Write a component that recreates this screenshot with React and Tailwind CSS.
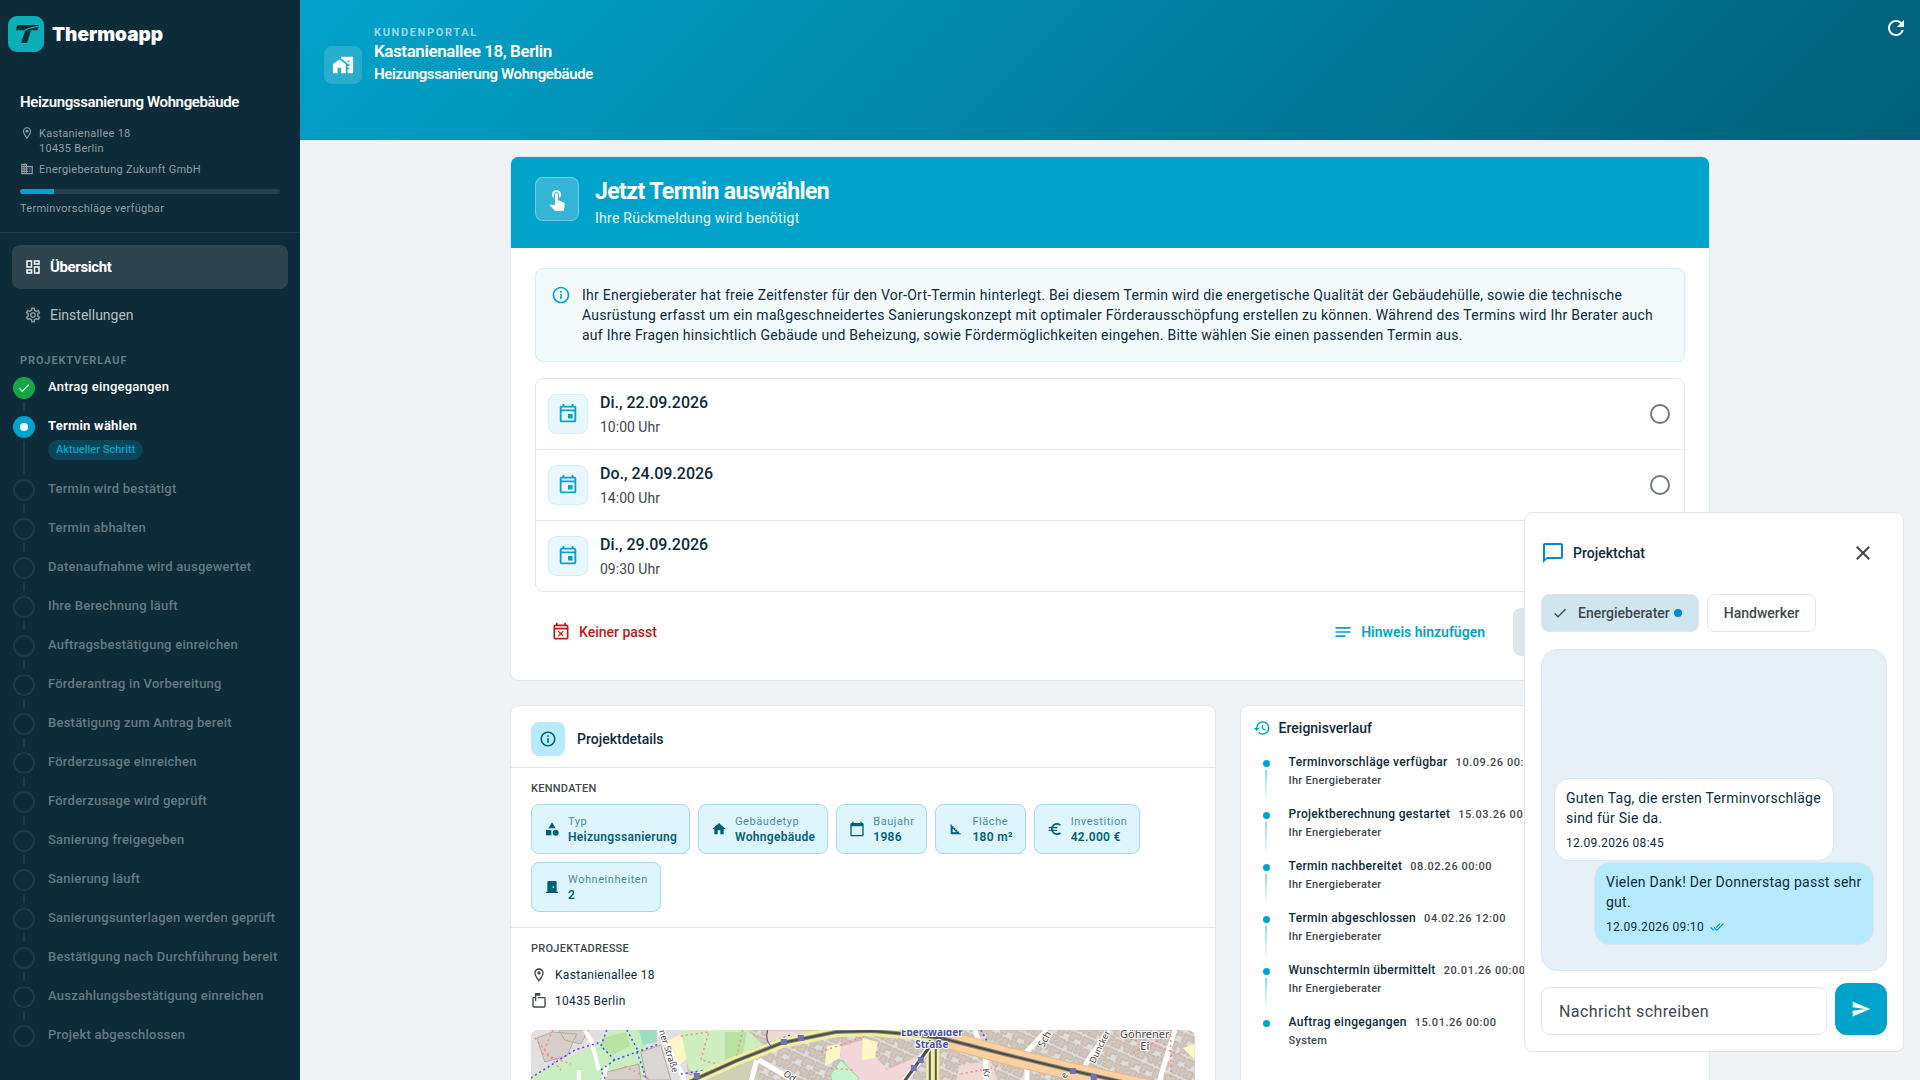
import React, { useState } from 'react'
import {
    MdBusiness, MdCalendarToday, MdCategory, MdCheck, MdChatBubbleOutline, MdClose, MdDoneAll, MdDoorFront,
    MdEuro, MdHistory, MdHome, MdHomeWork, MdInfoOutline, MdNotes, MdOutlineDashboard, MdOutlineEventBusy,
    MdOutlineInsertInvitation, MdOutlineLocationOn, MdOutlineMarkunreadMailbox, MdOutlineSettings, MdRefresh,
    MdSend, MdSquareFoot, MdTouchApp
} from 'react-icons/md'

const steps = [
    { label: 'Antrag eingegangen', state: 'done' },
    { label: 'Termin wählen', state: 'current' },
    { label: 'Termin wird bestätigt' },
    { label: 'Termin abhalten' },
    { label: 'Datenaufnahme wird ausgewertet' },
    { label: 'Ihre Berechnung läuft' },
    { label: 'Auftragsbestätigung einreichen' },
    { label: 'Förderantrag in Vorbereitung' },
    { label: 'Bestätigung zum Antrag bereit' },
    { label: 'Förderzusage einreichen' },
    { label: 'Förderzusage wird geprüft' },
    { label: 'Sanierung freigegeben' },
    { label: 'Sanierung läuft' },
    { label: 'Sanierungsunterlagen werden geprüft' },
    { label: 'Bestätigung nach Durchführung bereit' },
    { label: 'Auszahlungsbestätigung einreichen' },
    { label: 'Projekt abgeschlossen' },
]

const slots = [
    { id: 'a', date: 'Di., 22.09.2026', time: '10:00 Uhr' },
    { id: 'b', date: 'Do., 24.09.2026', time: '14:00 Uhr' },
    { id: 'c', date: 'Di., 29.09.2026', time: '09:30 Uhr' },
]

const facts = [
    { icon: MdCategory, label: 'Typ', value: 'Heizungssanierung' },
    { icon: MdHome, label: 'Gebäudetyp', value: 'Wohngebäude' },
    { icon: MdCalendarToday, label: 'Baujahr', value: '1986' },
    { icon: MdSquareFoot, label: 'Fläche', value: '180 m²' },
    { icon: MdEuro, label: 'Investition', value: '42.000 €' },
    { icon: MdDoorFront, label: 'Wohneinheiten', value: '2' },
]

const events = [
    { title: 'Terminvorschläge verfügbar', time: '10.09.26 00:00', by: 'Ihr Energieberater' },
    { title: 'Projektberechnung gestartet', time: '15.03.26 00:00', by: 'Ihr Energieberater' },
    { title: 'Termin nachbereitet', time: '08.02.26 00:00', by: 'Ihr Energieberater' },
    { title: 'Termin abgeschlossen', time: '04.02.26 12:00', by: 'Ihr Energieberater' },
    { title: 'Wunschtermin übermittelt', time: '20.01.26 00:00', by: 'Ihr Energieberater' },
    { title: 'Auftrag eingegangen', time: '15.01.26 00:00', by: 'System' },
]

const Logo = () => (
    <svg viewBox="0 0 36 36" className="w-9 h-9" aria-hidden="true">
        <rect width="36" height="36" rx="9" fill="#0aafb8" />
        <path d="M9 9H31L29.500 14.200H23L19 27H13L16.800 16Q17.300 14.200 15.500 14.200H8Z" fill="#0d2b38" />
        <path d="M15 16.500Q18 11.400 30.500 10.600" stroke="#0aafb8" strokeWidth="1.100" fill="none" />
    </svg>
)

const Step = ({ step, last }) => (
    <li className="flex gap-[13px]">
        <div className="flex flex-col items-center w-[22px] shrink-0">
            {step.state === 'done' && (
                <span className="flex items-center justify-center w-[22px] h-[22px] rounded-full bg-[#18a549]">
                    <MdCheck className="text-white text-[14px]" />
                </span>
            )}
            {step.state === 'current' && (
                <span className="flex items-center justify-center w-[22px] h-[22px] rounded-full bg-[#02a3cb]">
                    <span className="w-2 h-2 rounded-full bg-white" />
                </span>
            )}
            {!step.state && <span className="w-[22px] h-[22px] rounded-full border-2 border-[#1d3a47]" />}
            {!last && <span className="w-[2px] grow mt-[3px] mb-[5px] bg-[#1d3a47]" />}
        </div>
        <div className={step.state === 'current' ? 'h-[63px]' : 'h-[39px]'}>
            <p className={`text-[13px] leading-5 tracking-[0.018em] whitespace-nowrap ${step.state === 'current' ? 'font-bold text-white' : step.state === 'done' ? 'font-medium text-white' : 'font-medium text-[#657982]'}`}>
                {step.label}
            </p>
            {step.state === 'current' && (
                <span className="inline-block mt-1 px-2 rounded-full bg-[#0a4558] text-[11px] leading-5 font-medium text-[#02a3cb] align-top">Aktueller Schritt</span>
            )}
        </div>
    </li>
)

const Sidebar = () => (
    <aside className="w-[300px] shrink-0 bg-[#0d2b38] text-white">
        <div className="flex items-center gap-2 px-2 pt-4">
            <Logo />
            <span className="font-['Inter',sans-serif] text-[19px] leading-6 pt-px font-black">Thermoapp</span>
        </div>

        <div className="px-5 pt-[38px] pb-[15px] border-b border-[#1d3a47]">
            <h2 className="text-[15px] leading-6 font-semibold tracking-tight">Heizungssanierung Wohngebäude</h2>
            <div className="flex gap-[5px] mt-3 text-[11px] leading-[15px] tracking-wide text-[#919da4]">
                <MdOutlineLocationOn className="text-[14px] shrink-0" />
                <p>Kastanienallee 18<br />10435 Berlin</p>
            </div>
            <div className="flex gap-[5px] mt-[6px] text-[11px] leading-[15px] tracking-wide text-[#919da4]">
                <MdBusiness className="text-[14px] shrink-0" />
                <p>Energieberatung Zukunft GmbH</p>
            </div>
            <div className="mt-3 h-[5px] rounded-full bg-[#253f4b] overflow-hidden">
                <div className="h-full w-[13%] bg-[#02a3cb]" />
            </div>
            <p className="mt-[7px] text-[11px] leading-4 tracking-wide text-[#919da4]">Terminvorschläge verfügbar</p>
        </div>

        <nav className="flex flex-col gap-1 px-3 pt-3">
            <a href="#uebersicht" className="flex items-center gap-2 h-11 px-3 rounded-lg bg-[#2d444f] text-[15px] font-bold tracking-tight">
                <MdOutlineDashboard className="text-[18px]" />
                Übersicht
            </a>
            <a href="#einstellungen" className="flex items-center gap-2 h-11 px-3 rounded-lg text-sm text-[#b6bfc3]">
                <MdOutlineSettings className="text-[18px] text-[#8a979f]" />
                Einstellungen
            </a>
        </nav>

        <h3 className="px-5 mt-4 text-[11px] leading-4 font-bold tracking-[0.08em] text-[#657982]">PROJEKTVERLAUF</h3>
        <ol className="px-[13px] pt-2 pb-8">
            {steps.map((step, i) => <Step key={step.label} step={step} last={i === steps.length - 1} />)}
        </ol>
    </aside>
)

const Header = () => (
    <header className="flex items-start justify-between h-[140px] bg-linear-[135deg,#02a3cb,#015f78] text-white">
        <div className="flex gap-3 pl-6 pt-[25px]">
            <div className="flex items-center justify-center w-[38px] h-[38px] mt-[21px] rounded-lg bg-white/15">
                <MdHomeWork className="text-[22px]" />
            </div>
            <div>
                <p className="text-[11px] leading-[15px] font-bold tracking-[0.15em] text-white/60">KUNDENPORTAL</p>
                <h1 className="text-[17px] leading-[22px] font-semibold tracking-tight">Kastanienallee 18, Berlin</h1>
                <p className="text-[15px] leading-6 font-semibold tracking-tight">Heizungssanierung Wohngebäude</p>
            </div>
        </div>
        <button aria-label="Aktualisieren" className="p-3 mt-1">
            <MdRefresh className="text-2xl" />
        </button>
    </header>
)

const Appointment = () => {
    const [slot, setSlot] = useState('')
    return (
        <section className="rounded-lg border border-[#e1e6ea] bg-white overflow-hidden">
            <div className="flex gap-4 px-6 pt-5 h-[91px] bg-[#02a3cb] text-white">
                <div className="flex items-center justify-center w-11 h-11 rounded-lg border border-white/30 bg-white/20">
                    <MdTouchApp className="text-2xl" />
                </div>
                <div>
                    <h2 className="text-[23px] leading-[30px] font-bold tracking-tight">Jetzt Termin auswählen</h2>
                    <p className="text-sm leading-[22px] tracking-[0.018em] text-white/90">Ihre Rückmeldung wird benötigt</p>
                </div>
            </div>

            <div className="px-6 pt-5 pb-6">
                <div className="flex gap-[11px] pl-[15px] pr-4 py-4 rounded-lg border border-[#d1eff6] bg-[#f2fafc]">
                    <MdInfoOutline className="text-[20px] shrink-0 text-[#02a3cb]" />
                    <p className="text-sm leading-5 tracking-[0.018em] text-[#0d2b38]">
                        Ihr Energieberater hat freie Zeitfenster für den Vor-Ort-Termin hinterlegt. Bei diesem Termin wird die energetische Qualität der Gebäudehülle, sowie die technische Ausrüstung erfasst um ein maßgeschneidertes Sanierungskonzept mit optimaler Förderausschöpfung erstellen zu können. Während des Termins wird Ihr Berater auch auf Ihre Fragen hinsichtlich Gebäude und Beheizung, sowie Fördermöglichkeiten eingehen. Bitte wählen Sie einen passenden Termin aus.
                    </p>
                </div>

                <div className="mt-4 rounded-lg border border-[#e1e6ea] divide-y divide-[#e1e6ea]">
                    {slots.map((s) => (
                        <label key={s.id} className="flex items-center h-[70px] box-content pl-3 pr-[14px] cursor-pointer">
                            <span className="flex items-center justify-center w-10 h-10 rounded-lg border border-[#d1eff6] bg-[#e9f7fb]">
                                <MdOutlineInsertInvitation className="text-[22px] text-[#02a3cb]" />
                            </span>
                            <span className="grow ml-3 pt-[2px]">
                                <span className="block text-base leading-6 font-medium text-[#0d2b38]">{s.date}</span>
                                <span className="block text-sm leading-6 text-[#40484c]">{s.time}</span>
                            </span>
                            <input type="radio" name="slot" value={s.id} checked={slot === s.id} onChange={() => setSlot(s.id)} className="appearance-none w-5 h-5 rounded-full border-2 border-[#70787d] checked:border-[6px] checked:border-[#02a3cb]" />
                        </label>
                    ))}
                </div>

                <div className="flex items-center mt-4 pl-4 h-12 text-sm font-medium">
                    <button className="flex items-center gap-2 text-[#ba1a1a]">
                        <MdOutlineEventBusy className="text-[20px]" />
                        Keiner passt
                    </button>
                    <button className="flex items-center gap-2 ml-auto mr-7 font-semibold text-[#02a3cb]">
                        <MdNotes className="text-[20px]" />
                        Hinweis hinzufügen
                    </button>
                    <button disabled className="w-[172px] h-12 rounded-lg bg-[#e1e4e6] text-[#90979b]">Termin bestätigen</button>
                </div>
            </div>
        </section>
    )
}

// stylised city map of the area around the project address
const CityMap = () => (
    <svg viewBox="0 0 664 280" preserveAspectRatio="xMidYMin slice" className="block w-full h-[280px] rounded-lg bg-[#dedad6]" role="img" aria-label="Karte">
        <defs>
            <pattern id="blocksB" width="26" height="22" patternUnits="userSpaceOnUse" patternTransform="rotate(24)">
                <rect width="26" height="22" fill="#dfdedd" />
                <path d="M1 1H12V6H6V10H1ZM14 1H25V5H20V9H14ZM1 12H9V20H4V16H1ZM11 11H17V15H14V20H11ZM19 12H25V20H16V17H19Z" fill="#d2c6bd" stroke="#bfb0a6" strokeWidth="1" />
            </pattern>
        </defs>
        <rect width="664" height="280" fill="url(#blocksB)" />
        <path d="M0 0H150L160 60L150 280H0Z" fill="#e2e0de" />
        <path d="M0 46L70 12L80 0H112L118 30L106 60H0Z" fill="#c8eec0" />
        <path d="M72 8L95 2L99 16L82 25L70 18Z" fill="#b9e2a0" />
        <path d="M108 0H126V12L112 15Z" fill="#9fdcc4" />
        <path d="M110 22L130 15L140 50H116Z" fill="#dad6d3" stroke="#b8a99e" />
        <path d="M6 8L22 2L46 4L36 26L14 32ZM28 0H58L50 14L34 10ZM76 42L108 34L110 50H70Z" fill="#d5cfcb" stroke="#b8a99e" />
        <path d="M135 12L150 4L160 24L148 36Z" fill="#fbf8c4" />
        <path d="M150 0H216L232 14L172 44L158 40Z" fill="#ceeebf" />
        <path d="M194 2H216L212 24L194 30Z" fill="#b9e2a0" />
        <path d="M236 0H294L250 12L236 12Z" fill="#efd9d5" stroke="#c5aea6" />
        <path d="M166 50L226 30L228 50Z" fill="#cfd1b4" />
        <path d="M306 18L332 10L356 40L392 24L376 60H330Z" fill="#f3d6d8" />
        <path d="M332 8L347 12L344 28L331 30ZM296 16L310 14L309 28L294 36ZM652 18L664 14V30Z" fill="#fbf8c4" />
        <path d="M300 44L310 30L328 48L322 60H302Z" fill="#c5f5cf" stroke="#b0c9a0" />
        <path d="M428 36L460 30L470 60H424Z" fill="#efd9d5" />
        <path d="M444 0L455 30L460 280M516 0L496 22L498 280M578 0L556 32L520 120M644 0L630 46L600 200M128 0L152 46L190 280M228 30L262 50L300 100M226 30L218 60" stroke="#fff" strokeWidth="5" fill="none" />
        <path d="M54 0L61 12L68 40M76 36L70 60M48 40V60" stroke="#fff" strokeWidth="4" fill="none" />
        <g fill="none" strokeWidth="1.500" strokeDasharray="2 3">
            <path d="M0 48L44 20L70 12M76 0L70 16L84 30L106 22L128 14M106 22L112 38L116 52M84 30L70 40L76 52M96 0L108 22" stroke="#4547f0" />
            <path d="M150 44L188 38L222 20L262 4M450 0L458 14" stroke="#4547f0" />
            <path d="M4 8L30 40M22 0L12 24L40 34M150 6L178 2L170 30L196 36M212 0L206 26M94 36L120 50M300 38L322 40M430 44L470 36M590 6L650 24M640 4L600 24M640 0V50M290 22L340 4" stroke="#f58a8a" />
        </g>
        <path d="M158 52L205 31L251 13L305 2L341 1L387 5L410 9" stroke="#eff0a0" strokeWidth="10" fill="none" />
        <path d="M402 8V280" stroke="#eff0a0" strokeWidth="13" />
        <path d="M404 6L477 26L543 42L664 68" stroke="#e5b98a" strokeWidth="18" fill="none" />
        <path d="M404 6L477 26L543 42L664 68" stroke="#fbd0a0" strokeWidth="16" fill="none" />
        <path d="M158 52L205 31L251 13L305 2L341 1L387 5L414 9L477 25L543 41L664 68" stroke="#8b8b80" strokeWidth="4" fill="none" />
        <path d="M158 52L205 31L251 13L305 2L341 1L387 5L414 9L477 25L543 41L664 68" stroke="#4c4c48" strokeWidth="2" fill="none" />
        <path d="M399 10V280M405 10V280" stroke="#5a5a56" strokeWidth="2" />
        <path d="M398 18L373 52" stroke="#fff" strokeWidth="6" />
        <path d="M398 18L373 52" stroke="#4c4c48" strokeWidth="3" />
        <path d="M237 0Q234 10 240 16" stroke="#555" strokeWidth="1" fill="none" />
        <path d="M250 9h6v6h-6zM267 5h6v6h-6zM163 43h6v6h-6zM387 27h6v6h-6zM380 35h6v6h-6zM539 38h6v6h-6zM560 44h6v6h-6z" fill="#6f74b5" />
        <g fontFamily="Noto Sans, sans-serif" fontSize="11" fill="#444" stroke="#fff" strokeWidth="2" paintOrder="stroke">
            <text x="401" y="6" textAnchor="middle" fontSize="10" fontWeight="700" fill="#4a4fa8">Eberswalder</text>
            <text x="401" y="18" textAnchor="middle" fontSize="10" fontWeight="700" fill="#4a4fa8">Straße</text>
            <text x="614" y="8" textAnchor="middle">Göhrener</text>
            <text x="614" y="20" textAnchor="middle">Ei</text>
            <text transform="translate(128 1) rotate(72)" fontSize="9">ner Straße</text>
            <text transform="translate(564 34) rotate(-64)" fontSize="9">Duncker</text>
            <text transform="translate(513 18) rotate(-62)" fontSize="10">Sch</text>
            <text transform="translate(252 45) rotate(35)" fontSize="9">Od</text>
            <text transform="translate(452 39) rotate(80)" fontSize="9">Kr</text>
            <text transform="translate(535 49) rotate(-62)" fontSize="9">e</text>
        </g>
    </svg>
)

const ProjectDetails = () => (
    <section className="rounded-lg border border-[#e1e6ea] bg-white">
        <div className="flex items-center gap-3 px-5 h-[62px] pt-1 border-b border-[#e1e6ea]">
            <span className="flex items-center justify-center w-[34px] h-[34px] rounded-lg bg-[#b7eaff]">
                <MdInfoOutline className="text-[18px] text-[#015f78]" />
            </span>
            <h2 className="text-sm font-medium text-[#0d2b38]">Projektdetails</h2>
        </div>
        <div className="px-5 pt-[13px] pb-[15px] border-b border-[#e1e6ea]">
            <h3 className="text-[11px] leading-4 font-medium tracking-wide text-[#40484c]">KENNDATEN</h3>
            <div className="flex flex-wrap gap-2 mt-[7px]">
                {facts.map(({ icon: Icon, label, value }) => (
                    <div key={label} className="flex items-center gap-2 h-[50px] px-3 rounded-lg border border-[#a9d8e6] bg-[#dff5fd] text-[#015f78]">
                        <Icon className="text-base" />
                        <div>
                            <p className="text-[11px] leading-[15px] tracking-wider opacity-70">{label}</p>
                            <p className="text-xs leading-4 font-semibold tracking-wide">{value}</p>
                        </div>
                    </div>
                ))}
            </div>
        </div>
        <div className="px-5 pt-[13px] pb-5">
            <h3 className="text-[11px] leading-4 font-medium tracking-wide text-[#40484c]">PROJEKTADRESSE</h3>
            <p className="flex items-center gap-2 mt-[10px] text-xs leading-4 tracking-wide text-[#0d2b38]">
                <MdOutlineLocationOn className="text-base text-[#40484c]" />
                Kastanienallee 18
            </p>
            <p className="flex items-center gap-2 mt-[10px] mb-[21px] text-xs leading-4 tracking-wide text-[#0d2b38]">
                <MdOutlineMarkunreadMailbox className="text-base text-[#40484c]" />
                10435 Berlin
            </p>
            <CityMap />
        </div>
    </section>
)

const History = () => (
    <section className="rounded-lg border border-[#e1e6ea] bg-white px-3 pt-3">
        <div className="flex items-center gap-2">
            <MdHistory className="text-[18px] text-[#02a3cb]" />
            <h2 className="text-sm leading-5 font-medium text-[#0d2b38]">Ereignisverlauf</h2>
        </div>
        <ul className="mt-[15px]">
            {events.map((ev, i) => (
                <li key={ev.title} className="flex gap-[19px] pl-[10px] h-[52px]">
                    <div className="flex flex-col items-center w-[7px] shrink-0 pt-[7px]">
                        <span className="w-[7px] h-[7px] rounded-full bg-[#02a3cb]" />
                        {i < events.length - 1 && <span className="w-[2px] h-8 mt-[3px] bg-linear-to-b from-[#8fd6e8] to-white" />}
                    </div>
                    <div className="whitespace-nowrap">
                        <p className="text-xs leading-[18px] font-medium tracking-wide text-[#0d2b38]">
                            {ev.title}
                            <span className="ml-2 text-[11px] tracking-wider text-[#40484c]">{ev.time}</span>
                        </p>
                        <p className="text-[11px] leading-[18px] font-medium tracking-wide text-[#40484c]">{ev.by}</p>
                    </div>
                </li>
            ))}
        </ul>
    </section>
)

const Chat = () => (
    <aside className="fixed right-4 bottom-7 w-[380px] flex flex-col rounded-lg border border-[#dfe5ea] bg-white px-4 pt-4 pb-4">
        <div className="flex items-center h-12 gap-2">
            <MdChatBubbleOutline className="text-2xl text-[#0288d1]" />
            <h2 className="text-sm font-medium text-[#0d2b38]">Projektchat</h2>
            <button aria-label="Schließen" className="ml-auto p-3 text-[#40484c]">
                <MdClose className="text-2xl" />
            </button>
        </div>
        <div className="flex gap-2 mt-4 pt-px text-sm font-medium text-[#40484c]">
            <button className="flex items-center h-[38px] px-[10px] rounded-lg border border-[#dfe5ea] bg-[#cfe5f0]">
                <MdCheck className="text-[16px] mr-[10px]" />
                Energieberater
                <span className="w-2 h-2 ml-1 mr-[6px] rounded-full bg-[#0288d1]" />
            </button>
            <button className="h-[38px] px-4 rounded-lg border border-[#dfe5ea]">Handwerker</button>
        </div>
        <div className="flex flex-col justify-end gap-px h-[322px] mt-[17px] px-3 pb-[25px] rounded-2xl border border-[#dfe5ea] bg-[#e7f0f6] text-[#0d2b38]">
            <div className="self-start w-[280px] pl-[11px] pr-2 py-[9px] rounded-2xl border border-[#dfe5ea] bg-white">
                <p className="text-sm leading-5 tracking-[0.018em]">Guten Tag, die ersten Terminvorschläge sind für Sie da.</p>
                <p className="mt-[7px] text-xs leading-4 tracking-wide">12.09.2026 08:45</p>
            </div>
            <div className="self-end w-[280px] pl-[11px] pr-2 py-[9px] rounded-2xl border border-[#dfe5ea] bg-[#b7eaff]">
                <p className="text-sm leading-5 tracking-[0.018em]">Vielen Dank! Der Donnerstag passt sehr gut.</p>
                <p className="flex items-center gap-[6px] mt-[7px] text-xs leading-4 tracking-wide">
                    12.09.2026 09:10
                    <MdDoneAll className="text-[14px] text-[#0288d1]" />
                </p>
            </div>
        </div>
        <form className="flex items-end gap-2 mt-3" onSubmit={(e) => e.preventDefault()}>
            <input type="text" aria-label="Nachricht schreiben" placeholder="Nachricht schreiben" className="grow min-w-0 h-12 px-[17px] rounded-lg border border-[#dfe5ea] text-base tracking-wide placeholder:text-[#40484c]" />
            <button aria-label="Senden" className="flex items-center justify-center w-[52px] h-[52px] rounded-xl bg-[#02a3cb]">
                <MdSend className="text-xl text-white" />
            </button>
        </form>
    </aside>
)

export default function App() {
    return (
        <div className="flex h-screen overflow-hidden bg-[#eff3f6] font-['Roboto',sans-serif]">
            <Sidebar />
            <div className="grow min-w-0">
                <Header />
                <main className="max-w-[1200px] mx-auto pt-4">
                    <Appointment />
                    <div className="grid grid-cols-[3fr_2fr] gap-6 mt-6">
                        <ProjectDetails />
                        <History />
                    </div>
                </main>
            </div>
            <Chat />
        </div>
    )
}
